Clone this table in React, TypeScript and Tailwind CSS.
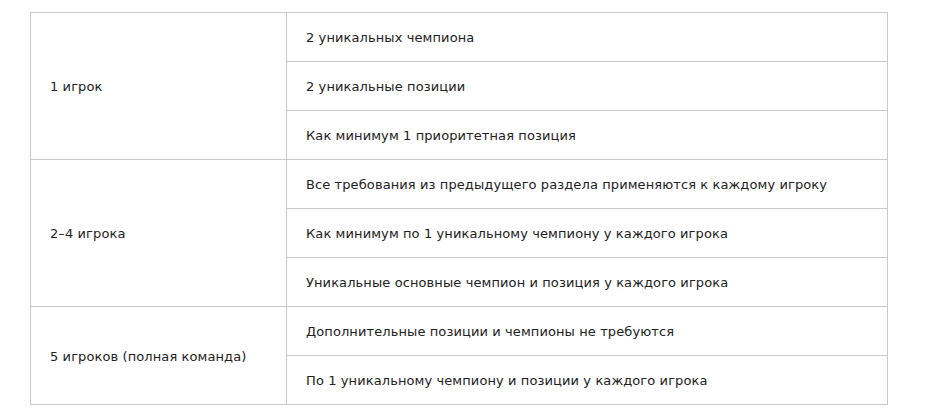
import React from "react";

const groups: { left: string; items: string[] }[] = [
  {
    left: "1 игрок",
    items: [
      "2 уникальных чемпиона",
      "2 уникальные позиции",
      "Как минимум 1 приоритетная позиция",
    ],
  },
  {
    left: "2–4 игрока",
    items: [
      "Все требования из предыдущего раздела применяются к каждому игроку",
      "Как минимум по 1 уникальному чемпиону у каждого игрока",
      "Уникальные основные чемпион и позиция у каждого игрока",
    ],
  },
  {
    left: "5 игроков (полная команда)",
    items: [
      "Дополнительные позиции и чемпионы не требуются",
      "По 1 уникальному чемпиону и позиции у каждого игрока",
    ],
  },
];

export default function App() {
  return (
    <div className="w-[932px] h-[420px] bg-white pt-[12px] pl-[30px]" style={{ fontFamily: '"DejaVu Sans", Verdana, sans-serif' }}>
      <table className="border-collapse w-[858px] text-[13px] text-[#222] tracking-[0.1px]">
        <tbody>
          {groups.map((g) =>
            g.items.map((it, i) => (
              <tr key={g.left + i} className="h-[49px]">
                {i === 0 && (
                  <td rowSpan={g.items.length} className="border border-[#c8c8c8] w-[256px] pl-[19px] pt-[2px] align-middle">
                    {g.left}
                  </td>
                )}
                <td className="border border-[#c8c8c8] pl-[19px] pt-[2px] align-middle">{it}</td>
              </tr>
            ))
          )}
        </tbody>
      </table>
    </div>
  );
}
